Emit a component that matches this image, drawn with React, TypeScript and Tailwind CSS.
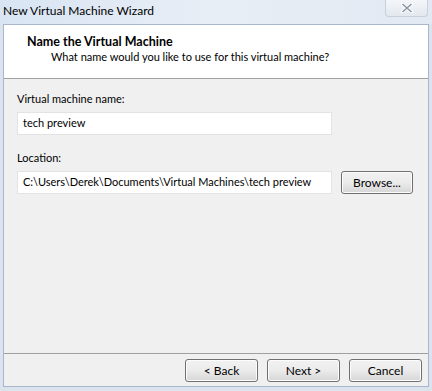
import React from 'react';

const font = { fontFamily: 'Lato, "Noto Sans", sans-serif' };

const WinButton = ({ label, className = '' }: { label: string; className?: string }) => (
  <button
    className={`shrink-0 h-[23px] rounded-[3px] border border-[#707070] bg-gradient-to-b from-[#f2f2f2] via-[#ebebeb] to-[#d6d6d6] text-[12px] text-black shadow-[inset_0_0_0_1px_#fcfcfc] ${className}`}
  >
    {label}
  </button>
);

const App = () => {
  return (
    <div className="w-[432px] h-[391px] bg-[#dbe4ee] flex flex-col overflow-hidden" style={font}>
      {/* Title bar */}
      <div className="h-[24px] flex items-start justify-between bg-gradient-to-r from-[#d9e5f3] via-[#e8eef6] to-[#e2e9f2]">
        <span className="pl-[3px] pt-[1px] text-[12px] text-black leading-[20px]">New Virtual Machine Wizard</span>
        <div className="mr-[4px] w-[43px] h-[17px] rounded-b-[4px] border border-t-0 border-[#c8d0da] bg-gradient-to-b from-[#f4f6f9] to-[#e3e8ee] flex items-center justify-center">
          <svg width="12" height="10" viewBox="0 0 12 10">
            <path d="M1.5 1 L10.5 9 M10.5 1 L1.5 9" stroke="#ffffff" strokeWidth="3.2" strokeLinecap="square" />
            <path d="M1.5 1 L10.5 9 M10.5 1 L1.5 9" stroke="#8a97a8" strokeWidth="1.6" />
          </svg>
        </div>
      </div>

      {/* Client area */}
      <div className="mx-[3px] flex-1 border border-[#a9b8c9] flex flex-col bg-[#f0f0f0] mb-[4px]">
        {/* Header */}
        <div className="h-[54px] bg-white border-b border-[#a0a0a0] pt-[9px]">
          <div className="pl-[23px] text-[12.5px] font-bold leading-[15px] text-black">Name the Virtual Machine</div>
          <div className="pl-[47px] text-[11px] leading-[15px] text-black">What name would you like to use for this virtual machine?</div>
        </div>

        {/* Body */}
        <div className="flex-1 px-[13px] pt-[12px]">
          <div className="text-[11px] leading-[15px] text-black">Virtual machine name:</div>
          <div className="mt-[6px] w-[315px] h-[23px] bg-white border border-[#e3e3e3] flex items-center pl-[5px] text-[11px] text-black">
            tech preview
          </div>

          <div className="mt-[15px] text-[11px] leading-[15px] text-black">Location:</div>
          <div className="mt-[6px] flex items-center gap-[9px]">
            <div className="shrink-0 w-[315px] h-[23px] bg-white border border-[#e3e3e3] flex items-center pl-[5px] text-[11px] text-black whitespace-nowrap">
              C:\Users\Derek\Documents\Virtual Machines\tech preview
            </div>
            <WinButton label="Browse..." className="w-[72px]" />
          </div>
        </div>

        {/* Footer */}
        <div className="h-[33px] border-t border-[#a0a0a0] flex items-start pt-[5px] justify-end gap-[9px] pr-[6px]">
          <WinButton label="< Back" className="w-[73px]" />
          <WinButton label="Next >" className="w-[73px]" />
          <WinButton label="Cancel" className="w-[73px]" />
        </div>
      </div>
    </div>
  );
};

export default App;
